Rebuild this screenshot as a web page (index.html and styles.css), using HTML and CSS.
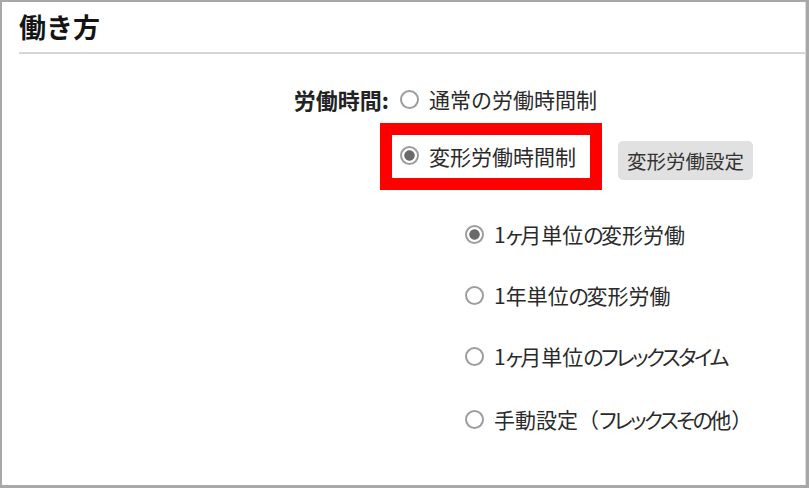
FILE: index.html
```html
<!DOCTYPE html>
<html lang="ja">
<head>
<meta charset="utf-8">
<link rel="stylesheet" href="styles.css">
</head>
<body>
<div class="frame">
  <div class="panel">
    <div class="header"><h1 class="title">働き方</h1></div>
    <div class="form">
      <div class="row-main">
        <div class="label">労働時間:</div>
        <span class="radio"></span>
        <span class="text">通常の労働時間制</span>
      </div>
      <div class="row-second">
        <div class="highlight">
          <span class="radio checked"></span>
          <span class="text">変形労働時間制</span>
        </div>
        <button class="btn">変形労働設定</button>
      </div>
      <div class="sub-list">
        <div class="sub-row"><span class="radio checked"></span><span class="text">1<span class="kana">ヶ</span>月単位<span class="kana">の</span>変形労働</span></div>
        <div class="sub-row"><span class="radio"></span><span class="text">1年単位<span class="kana">の</span>変形労働</span></div>
        <div class="sub-row"><span class="radio"></span><span class="text">1<span class="kana">ヶ</span>月単位<span class="kana">のフレックスタイム</span></span></div>
        <div class="sub-row last"><span class="radio"></span><span class="text">手動設定（<span class="kana">フレックスその</span>他）</span></div>
      </div>
    </div>
  </div>
</div>
</body>
</html>
```

FILE: styles.css
```css
* { box-sizing: border-box; }
html, body { margin: 0; padding: 0; background: #fff; }
body {
  font-family: "Noto Sans CJK JP", "Noto Sans", sans-serif;
  color: #2a2a2a;
}
.frame {
  width: 809px;
  height: 488px;
  border-top: 2px solid #a8a8a8;
  border-left: 2px solid #a8a8a8;
  border-right: 3px solid #a8a8a8;
  border-bottom: 3px solid #a8a8a8;
}
.panel {
  height: 100%;
  border-right: 1px solid #dcdcdc;
}
.header {
  height: 52px;
  margin-left: 17px;
  border-bottom: 2px solid #d6d6d6;
  display: flex;
  align-items: center;
}
.title {
  margin: 0;
  font-size: 27px;
  font-weight: 700;
  line-height: 1;
  color: #141414;
  padding-bottom: 2px;
}
.form {
  display: flex;
  flex-direction: column;
}
.text {
  font-size: 21px;
  line-height: 30px;
  white-space: nowrap;
}
.kana {
  font-feature-settings: "palt" 1;
  letter-spacing: -2.5px;
}
.radio {
  width: 19px;
  height: 19px;
  border-radius: 50%;
  border: 2px solid #9d9d9d;
  background: #fff;
  flex: none;
  margin-right: 10px;
}
.radio.checked {
  background: radial-gradient(circle, #6a6a6a 0 4.8px, #fff 5.6px);
}
.row-main {
  display: flex;
  align-items: center;
  height: 30px;
  margin-top: 30px;
}
.label {
  width: 387px;
  text-align: right;
  font-size: 22px;
  font-weight: 700;
  line-height: 30px;
  margin-right: 11px;
  color: #222;
}
.row-second {
  display: flex;
  align-items: flex-start;
  margin-top: 9px;
  margin-left: 378px;
}
.highlight {
  display: flex;
  align-items: center;
  border: 12px solid #ff0000;
  height: 67px;
  padding: 0 14px 2px 8px;
}
.btn {
  margin-top: 18px;
  margin-left: 16px;
  height: 39px;
  padding: 0 9px;
  border: none;
  border-radius: 5px;
  background: #e1e1e1;
  color: #333;
  font-family: inherit;
  font-size: 19.5px;
  line-height: 1;
}
.sub-list {
  display: flex;
  flex-direction: column;
  gap: 31px;
  margin-top: 29px;
  margin-left: 463px;
}
.sub-row {
  display: flex;
  align-items: center;
  height: 30px;
}
.sub-row.last {
  margin-top: 2px;
}
```
